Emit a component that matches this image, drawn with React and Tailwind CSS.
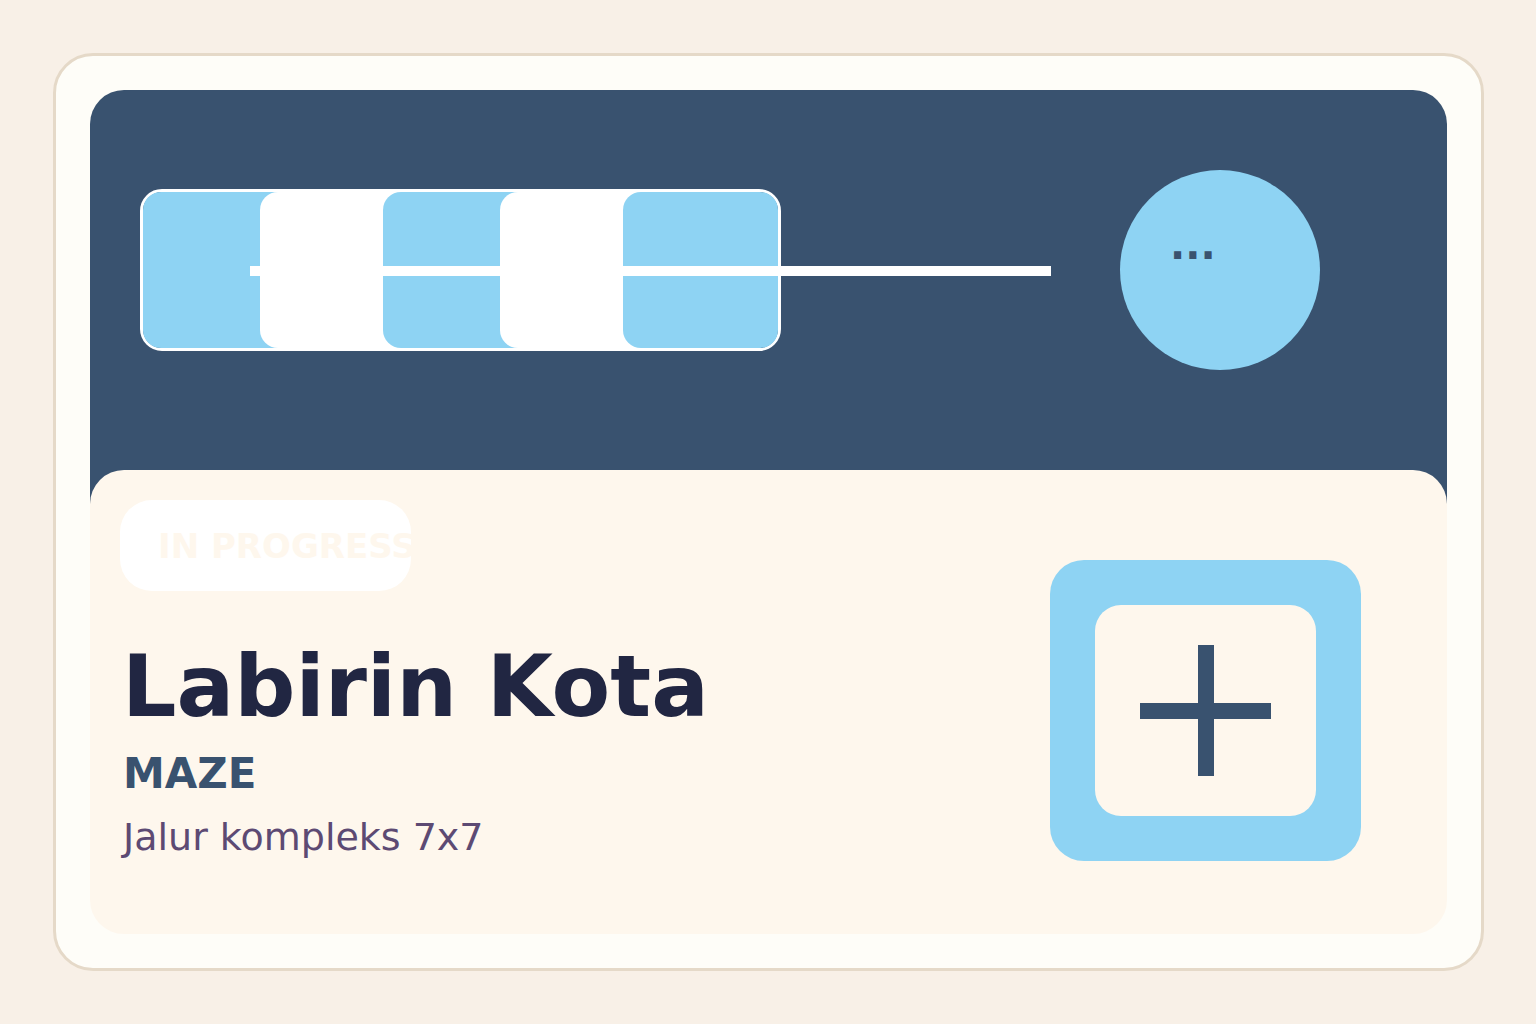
import React from 'react';

const font = { fontFamily: '"DejaVu Sans", "Liberation Sans", sans-serif' };

// one tile of the track; later tiles sit over the earlier ones
const Cell = ({ color, className }) => (
    <div className={`h-full shrink-0 rounded-[18px] ${color} ${className}`}></div>
);

const App = () => {
    return (
        <div className="w-full h-[1024px] bg-[#f8f0e7] pt-[53px] pl-[53px]" style={font}>
            <div className="w-[1431px] h-[918px] rounded-[40px] border-[3px] border-[#e5d9c8] bg-[#fefdf8] p-[34px] flex flex-col">
                {/* Header band */}
                <div className="relative h-[420px] shrink-0 rounded-t-[34px] bg-[#39526f] pt-[80px] pl-[50px] pr-[127px]">
                    <div className="flex items-center justify-between h-[200px]">
                        <div className="w-[641px] h-[162px] rounded-[22px] border-[3px] border-white">
                            <div className="flex h-full">
                                <Cell color="bg-[#8ed3f3]" className="w-[160px]" />
                                <Cell color="bg-white" className="w-[160px] -ml-[43px]" />
                                <Cell color="bg-[#8ed3f3]" className="w-[160px] -ml-[37px]" />
                                <Cell color="bg-white" className="w-[160px] -ml-[43px]" />
                                <Cell color="bg-[#8ed3f3]" className="w-[155px] -ml-[37px]" />
                            </div>
                        </div>
                        <div className="w-[200px] h-[200px] rounded-full bg-[#8ed3f3] pt-[55px] pl-[50px]">
                            <div className="text-[40px] leading-none font-bold text-[#39526f]">...</div>
                        </div>
                    </div>
                    {/* connector running through the track */}
                    <div className="absolute left-[160px] top-[176px] w-[801px] h-[10px] bg-white"></div>
                </div>

                {/* Info panel */}
                <div className="relative -mt-[40px] flex-1 rounded-[34px] bg-[#fef7ed] flex justify-between">
                    <div className="pl-[30px] pt-[30px] flex flex-col items-start">
                        <div className="w-[291px] h-[91px] rounded-[32px] bg-white flex items-center pl-[38px]">
                            <span className="text-[34px] leading-none font-bold text-[#fef7ed] whitespace-nowrap">IN PROGRESS</span>
                        </div>
                        <h1 className="mt-[53px] pl-[2px] text-[85.5px] leading-none font-bold text-[#212642] whitespace-nowrap">
                            Labirin Kota
                        </h1>
                        <div className="mt-[23px] pl-[3px] text-[42px] leading-none font-bold text-[#39526f]">MAZE</div>
                        <div className="mt-[23px] pl-[3px] text-[38px] leading-none text-[#5d4a73]">Jalur kompleks 7x7</div>
                    </div>

                    <div className="mt-[90px] mr-[86px] w-[311px] h-[301px] rounded-[34px] bg-[#8ed3f3] p-[45px]">
                        <div className="w-full h-full rounded-[26px] bg-[#fef7ed] flex items-center justify-center">
                            <svg width="131" height="131" viewBox="0 0 131 131">
                                <rect x="58" y="0" width="16" height="131" fill="#39526f" />
                                <rect x="0" y="58" width="131" height="16" fill="#39526f" />
                            </svg>
                        </div>
                    </div>
                </div>
            </div>
        </div>
    );
};

export default App;
